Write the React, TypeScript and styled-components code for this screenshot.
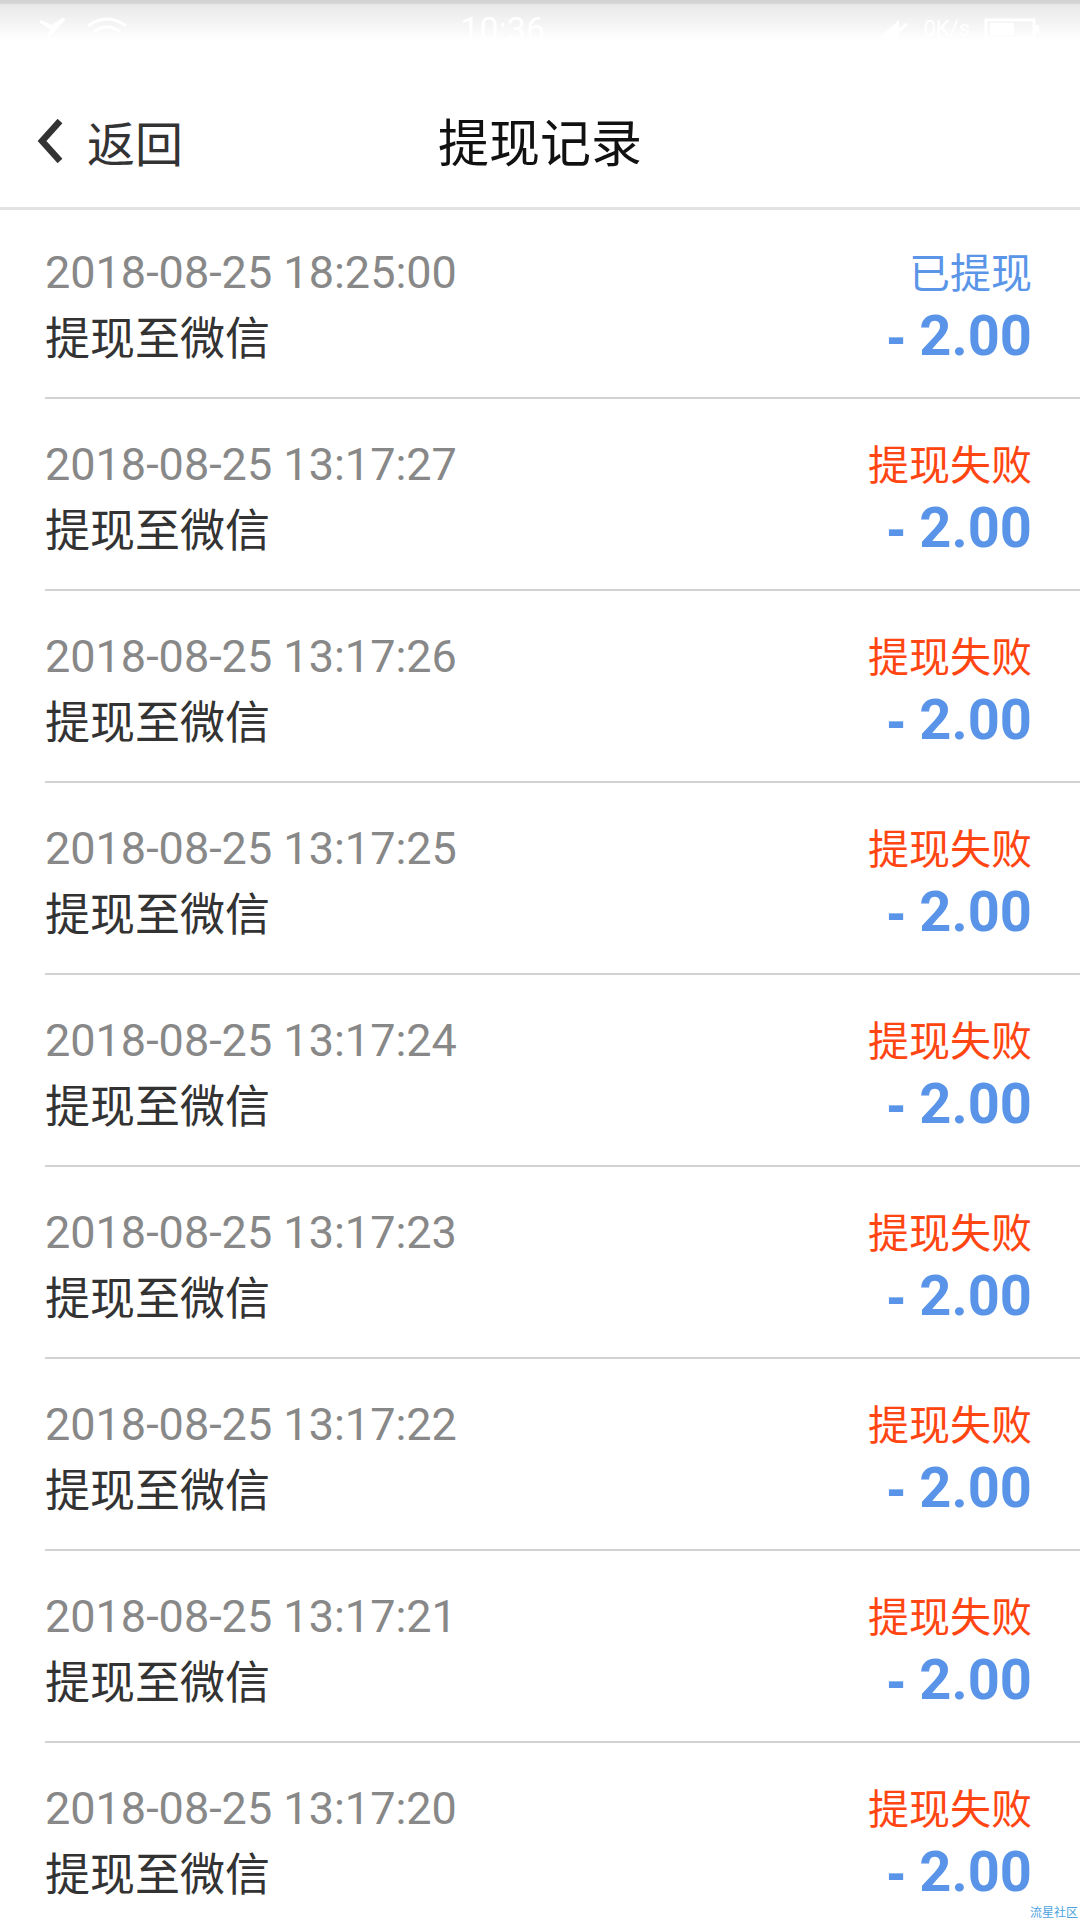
import React from 'react';
import styled, { createGlobalStyle } from 'styled-components';

const GlobalStyle = createGlobalStyle`
  html, body {
    margin: 0;
    padding: 0;
    background: #fff;
  }
  body {
    font-family: Roboto, "Noto Sans CJK SC", sans-serif;
  }
`;

type Record = {
  time: string;
  status: string;
  done: boolean;
  amount: string;
};

const records: Record[] = [
  { time: '2018-08-25 18:25:00', status: '已提现', done: true, amount: '2.00' },
  { time: '2018-08-25 13:17:27', status: '提现失败', done: false, amount: '2.00' },
  { time: '2018-08-25 13:17:26', status: '提现失败', done: false, amount: '2.00' },
  { time: '2018-08-25 13:17:25', status: '提现失败', done: false, amount: '2.00' },
  { time: '2018-08-25 13:17:24', status: '提现失败', done: false, amount: '2.00' },
  { time: '2018-08-25 13:17:23', status: '提现失败', done: false, amount: '2.00' },
  { time: '2018-08-25 13:17:22', status: '提现失败', done: false, amount: '2.00' },
  { time: '2018-08-25 13:17:21', status: '提现失败', done: false, amount: '2.00' },
  { time: '2018-08-25 13:17:20', status: '提现失败', done: false, amount: '2.00' },
];

const App = () => {
  return (
    <Page>
      <GlobalStyle />
      <StatusBar>
        <StatusGroup>
          <svg width="34" height="22" viewBox="0 0 34 22">
            <path d="M2 3 L14 8 L24 1 L28 2 L20 11 L12 20 L9 19 L12 12 L2 6 Z" fill="#fff" />
          </svg>
          <svg width="42" height="24" viewBox="0 0 42 24">
            <path d="M2 10 Q21 -4 40 10" stroke="#fff" strokeWidth="3" fill="none" />
            <path d="M8 16 Q21 6 34 16" stroke="#fff" strokeWidth="3" fill="none" />
          </svg>
        </StatusGroup>
        <StatusTime>10:36</StatusTime>
        <StatusGroup>
          <svg width="32" height="22" viewBox="0 0 32 22">
            <path d="M2 20 L22 2 L22 20 Z" fill="#fff" />
            <path d="M14 20 L30 6" stroke="#fff" strokeWidth="3" />
          </svg>
          <StatusSpeed>0K/s</StatusSpeed>
          <svg width="56" height="22" viewBox="0 0 56 22">
            <rect x="2" y="2" width="48" height="18" stroke="#fff" strokeWidth="3" fill="none" />
            <rect x="6" y="5" width="24" height="12" fill="#fff" />
            <rect x="51" y="7" width="4" height="8" fill="#fff" />
          </svg>
        </StatusGroup>
      </StatusBar>

      <NavBar>
        <BackButton>
          <svg width="26" height="44" viewBox="0 0 26 44">
            <polyline points="23,2 5,22 23,42" stroke="#333" strokeWidth="6.5" fill="none" />
          </svg>
          <BackText>返回</BackText>
        </BackButton>
        <Title>提现记录</Title>
        <span />
      </NavBar>

      <List>
        {records.map((r) => (
          <Row key={r.time}>
            <TopLine>
              <Time>{r.time}</Time>
              <Status done={r.done}>{r.status}</Status>
            </TopLine>
            <BottomLine>
              <Label>提现至微信</Label>
              <Amount>
                <Sign>-</Sign> {r.amount}
              </Amount>
            </BottomLine>
          </Row>
        ))}
      </List>

      <Watermark>流星社区</Watermark>
    </Page>
  );
};

const Page = styled.div`
  position: relative;
  width: 1080px;
  height: 1920px;
  overflow: hidden;
  background: #fff;
`;

const StatusBar = styled.div`
  height: 72px;
  box-sizing: border-box;
  padding: 16px 40px 0 38px;
  display: flex;
  align-items: flex-start;
  justify-content: space-between;
  background: linear-gradient(
    to bottom,
    #d3d3d3 0px,
    #d3d3d3 3px,
    #e9e9e9 5px,
    #f7f7f7 28px,
    #ffffff 40px
  );
`;

const StatusGroup = styled.div`
  display: flex;
  align-items: center;
  gap: 14px;
`;

const StatusTime = styled.span`
  font-family: Roboto, sans-serif;
  font-size: 34px;
  line-height: 26px;
  color: #fff;
`;

const StatusSpeed = styled.span`
  font-family: Roboto, sans-serif;
  font-size: 22px;
  color: #fff;
`;

const NavBar = styled.div`
  height: 135px;
  display: grid;
  grid-template-columns: 1fr auto 1fr;
  align-items: center;
  border-bottom: 3px solid #e2e2e4;
`;

const BackButton = styled.div`
  display: flex;
  align-items: center;
  padding-left: 37px;
  gap: 24px;
  margin-top: 2px;
`;

const BackText = styled.span`
  font-family: "Noto Sans CJK SC", sans-serif;
  font-size: 48px;
  line-height: 56px;
  color: #333;
`;

const Title = styled.h1`
  margin: 0;
  font-family: "Noto Sans CJK SC", sans-serif;
  font-size: 51px;
  line-height: 60px;
  font-weight: 400;
  color: #111;
`;

const List = styled.div`
  display: flex;
  flex-direction: column;
`;

const Row = styled.div`
  height: 192px;
  margin-left: 45px;
  padding: 0 48px 28px 0;
  box-sizing: border-box;
  display: flex;
  flex-direction: column;
  justify-content: flex-end;
  border-bottom: 2px solid #d2d2d2;

  &:first-child {
    height: 189px;
  }
`;

const TopLine = styled.div`
  display: flex;
  justify-content: space-between;
  align-items: baseline;
  margin-bottom: 2px;
`;

const BottomLine = styled.div`
  display: flex;
  justify-content: space-between;
  align-items: baseline;
`;

const Time = styled.span`
  font-family: Roboto, sans-serif;
  font-size: 45px;
  line-height: 56px;
  color: #888;
`;

const Status = styled.span<{ done?: boolean }>`
  font-family: "Noto Sans CJK SC", sans-serif;
  font-size: 41px;
  line-height: 56px;
  color: ${({ done }) => (done ? '#5b95e8' : '#ff4612')};
`;

const Label = styled.span`
  font-family: "Noto Sans CJK SC", sans-serif;
  font-size: 45px;
  line-height: 66px;
  color: #333;
`;

const Amount = styled.span`
  font-family: Roboto, sans-serif;
  font-size: 56px;
  line-height: 66px;
  font-weight: 700;
  color: #5a94e8;
`;

const Sign = styled.span`
  font-family: "Liberation Sans", Arial, sans-serif;
  font-weight: 700;
`;

const Watermark = styled.span`
  position: absolute;
  right: 2px;
  bottom: 1px;
  font-family: "Noto Sans CJK SC", sans-serif;
  font-size: 12px;
  line-height: 14px;
  color: #4da3e0;
`;

export default App;
